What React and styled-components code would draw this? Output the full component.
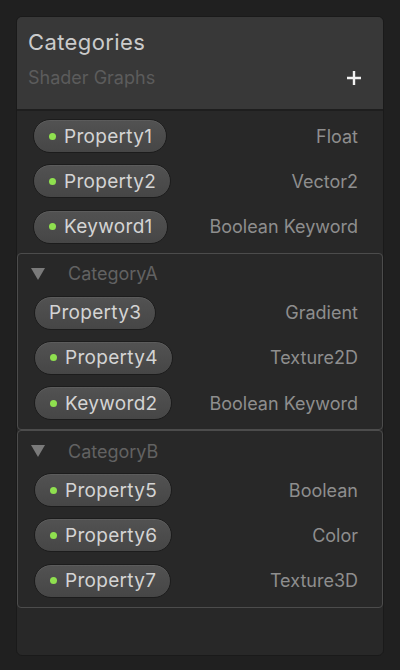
import React from 'react';
import styled, { createGlobalStyle } from 'styled-components';

const Global = createGlobalStyle`
  html, body {
    margin: 0;
    background: #202020;
    font-family: Inter, "Noto Sans", sans-serif;
  }
`;

const Page = styled.div`
  padding: 16px 16px 14px 16px;
`;

const Panel = styled.div`
  height: 640px;
  background: #282828;
  border: 1px solid #1a1a1a;
  border-radius: 6px;
  overflow: hidden;
  box-sizing: border-box;
`;

const Header = styled.div`
  background: #383838;
  border-bottom: 2px solid #1e1e1e;
  padding: 9px 21px 0 11px;
  height: 83px;
`;

const Title = styled.div`
  font-size: 22px;
  letter-spacing: 0.4px;
  color: #cbcbcb;
  line-height: 32px;
`;

const SubRow = styled.div`
  display: flex;
  align-items: center;
  justify-content: space-between;
  margin-top: 8px;
`;

const Subtitle = styled.div`
  font-size: 18px;
  color: #5c5c5c;
  line-height: 24px;
`;

const Plus = styled.svg`
  width: 16px;
  height: 16px;
  display: block;
`;

const Body = styled.div`
  padding-top: 8px;
`;

const Rows = styled.div`
  display: flex;
  flex-direction: column;
  gap: 11.3px;
  padding: 0 25px 9px 16px;
`;

const Row = styled.div`
  display: flex;
  align-items: center;
  justify-content: space-between;
  height: 34px;
`;

const Pill = styled.div`
  display: flex;
  align-items: center;
  gap: 8px;
  height: 34px;
  box-sizing: border-box;
  padding: 0 14px 0 ${(p) => (p.$dot ? '15px' : '14px')};
  border-radius: 17px;
  border: 1px solid #1c1c1c;
  background: linear-gradient(#525252, #464646);
  box-shadow: inset 0 1px 0 rgba(255, 255, 255, 0.06);
  font-size: 19px;
  letter-spacing: 0.3px;
  color: #d4d4d4;
`;

const Dot = styled.span`
  width: 7px;
  height: 7px;
  border-radius: 50%;
  background: #8fe04f;
`;

const TypeLabel = styled.div`
  font-size: 18px;
  color: #8e8e8e;
`;

const Section = styled.div`
  border: 1px solid #4c4c4c;
  border-radius: 4px;
`;

const SectionHeader = styled.div`
  display: flex;
  align-items: center;
  height: 40px;
  padding-left: 13px;
  gap: 23px;
`;

const Triangle = styled.svg`
  width: 14px;
  height: 12px;
  display: block;
`;

const SectionTitle = styled.div`
  font-size: 18px;
  color: #626262;
`;

const SectionRows = styled(Rows)`
  padding: 2px 24px 9px 16px;
`;

const top = [
  { name: 'Property1', type: 'Float', dot: true },
  { name: 'Property2', type: 'Vector2', dot: true },
  { name: 'Keyword1', type: 'Boolean Keyword', dot: true },
];

const sections = [
  {
    title: 'CategoryA',
    items: [
      { name: 'Property3', type: 'Gradient', dot: false },
      { name: 'Property4', type: 'Texture2D', dot: true },
      { name: 'Keyword2', type: 'Boolean Keyword', dot: true },
    ],
  },
  {
    title: 'CategoryB',
    items: [
      { name: 'Property5', type: 'Boolean', dot: true },
      { name: 'Property6', type: 'Color', dot: true },
      { name: 'Property7', type: 'Texture3D', dot: true },
    ],
  },
];

function Item({ item }) {
  return (
    <Row>
      <Pill $dot={item.dot}>
        {item.dot && <Dot />}
        {item.name}
      </Pill>
      <TypeLabel>{item.type}</TypeLabel>
    </Row>
  );
}

export default function App() {
  return (
    <Page>
      <Global />
      <Panel>
        <Header>
          <Title>Categories</Title>
          <SubRow>
            <Subtitle>Shader Graphs</Subtitle>
            <Plus viewBox="0 0 16 16">
              <path d="M8 1v14M1 8h14" stroke="#f2f2f2" strokeWidth="2.4" />
            </Plus>
          </SubRow>
        </Header>
        <Body>
          <Rows>
            {top.map((it) => (
              <Item key={it.name} item={it} />
            ))}
          </Rows>
          {sections.map((s) => (
            <Section key={s.title}>
              <SectionHeader>
                <Triangle viewBox="0 0 14 12">
                  <path d="M0 0h14L7 12z" fill="#7a7a7a" />
                </Triangle>
                <SectionTitle>{s.title}</SectionTitle>
              </SectionHeader>
              <SectionRows>
                {s.items.map((it) => (
                  <Item key={it.name} item={it} />
                ))}
              </SectionRows>
            </Section>
          ))}
        </Body>
      </Panel>
    </Page>
  );
}
